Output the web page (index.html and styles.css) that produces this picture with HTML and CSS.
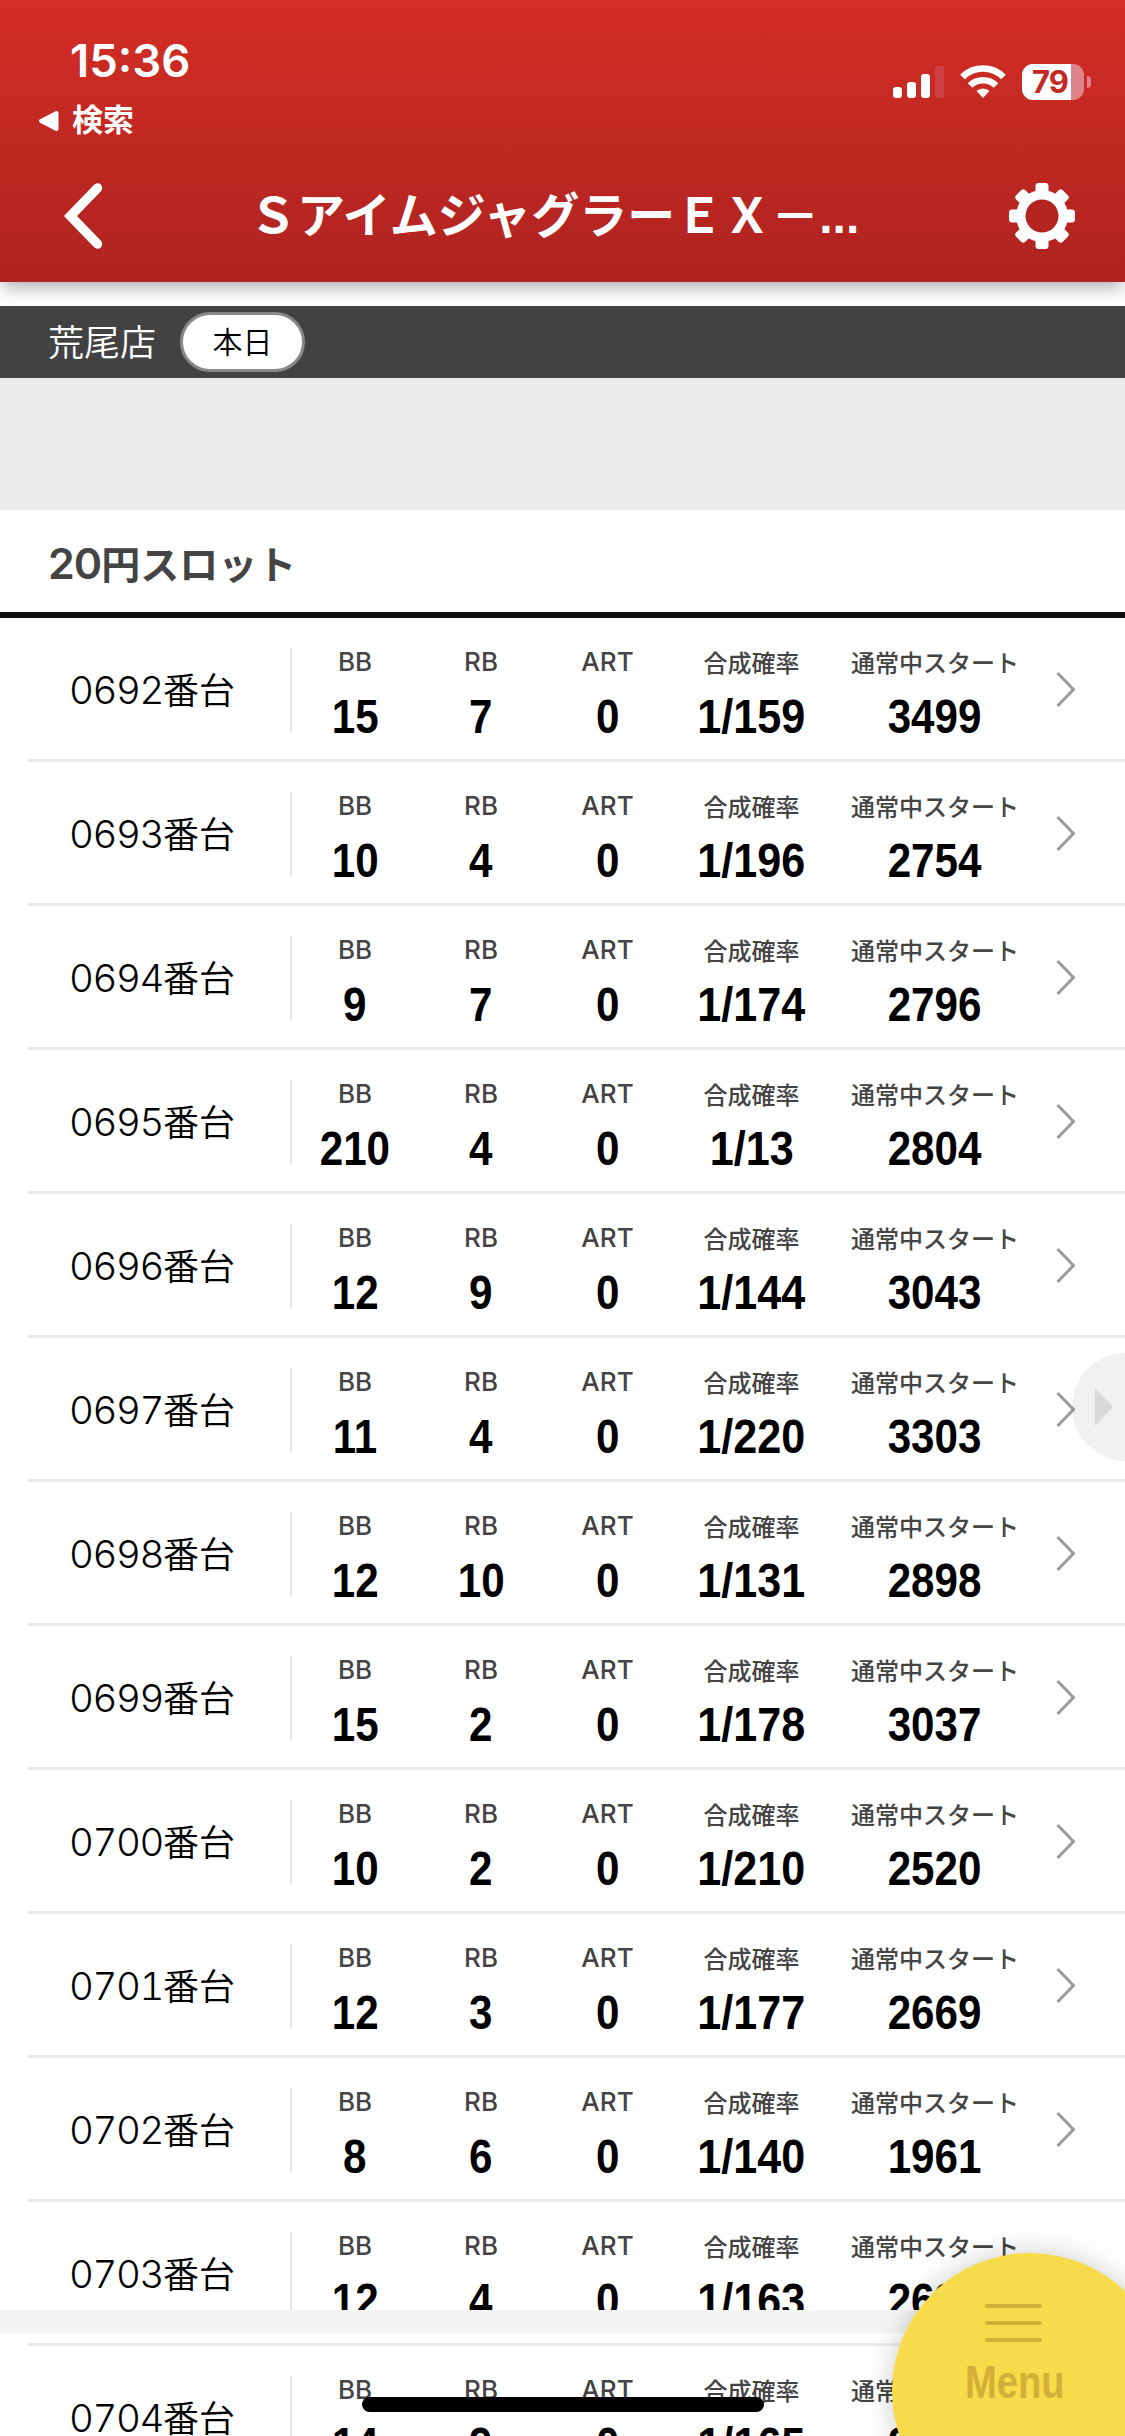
FILE: index.html
```html
<!DOCTYPE html>
<html lang="ja">
<head>
<meta charset="utf-8">
<title>Sアイムジャグラー</title>
<link rel="stylesheet" href="styles.css">
</head>
<body>
<header class="header">
  <div class="status">
    <div class="status-left">
      <div class="time">15:36</div>
      <div class="back-app"><svg width="21" height="22" viewBox="0 0 21 22"><path d="M3 11 L18.500 3 V19 Z" fill="#fff" stroke="#fff" stroke-width="4" stroke-linejoin="round"/></svg><span>検索</span></div>
    </div>
    <div class="status-right">
      <svg class="signal" width="52" height="36" viewBox="0 0 52 36"><g fill="#fff"><rect x="1" y="23" width="9" height="11" rx="3"/><rect x="15" y="18" width="9" height="16" rx="3"/><rect x="29" y="10" width="9" height="24" rx="3"/><rect x="43" y="2" width="9" height="32" rx="3" fill="#cd4146"/></g></svg>
      <svg class="wifi" width="46" height="36" viewBox="0 0 46 36"><g fill="none" stroke="#fff" stroke-width="6.500"><path d="M2.500 13 A29 29 0 0 1 43.500 13"/><path d="M10 21.500 A18.500 18.500 0 0 1 36 21.500"/></g><path d="M23 34 L16.500 27 A9.500 9.500 0 0 1 29.500 27 Z" fill="#fff"/></svg>
      <div class="battery"><span>79</span></div><i class="battery-tip"></i>
    </div>
  </div>
  <div class="nav">
    <svg class="nav-back" width="44" height="72" viewBox="0 0 44 72"><path d="M37.500 8 L10.500 36 L37.500 64" fill="none" stroke="#fff" stroke-width="9.500" stroke-linecap="round"/></svg>
    <h1 class="title">ＳアイムジャグラーＥＸ－<span class="dots">...</span></h1>
    <svg class="gear" width="66" height="66" viewBox="-33 -33 66 66"><g fill="#fff"><circle r="26"/><g id="t"><rect x="-6.500" y="-33" width="13" height="66" rx="3"/><rect x="-33" y="-6.500" width="66" height="13" rx="3"/></g><use href="#t" transform="rotate(45)"/></g><circle r="16.500" fill="#b32420"/></svg>
  </div>
</header>
<div class="shop"><span class="shop-name">荒尾店</span><span class="pill">本日</span></div>
<div class="spacer"></div>
<h2 class="section"><b>20</b>円スロット</h2>
<main class="list" id="list"></main>
<div class="band"></div>
<div class="side-tab"><svg width="18" height="38" viewBox="0 0 18 38"><path d="M0 0 L18 19 L0 38 Z" fill="#d9d9d9"/></svg></div>
<div class="menu"><i></i><i></i><i></i><span>Menu</span></div>
<div class="home-bar"></div>
<script src="rows.js"></script>
</body>
</html>
```
FILE: rows.js
```js
const machines = [
  ['0692', '15', '7', '0', '1/159', '3499'],
  ['0693', '10', '4', '0', '1/196', '2754'],
  ['0694', '9', '7', '0', '1/174', '2796'],
  ['0695', '210', '4', '0', '1/13', '2804'],
  ['0696', '12', '9', '0', '1/144', '3043'],
  ['0697', '11', '4', '0', '1/220', '3303'],
  ['0698', '12', '10', '0', '1/131', '2898'],
  ['0699', '15', '2', '0', '1/178', '3037'],
  ['0700', '10', '2', '0', '1/210', '2520'],
  ['0701', '12', '3', '0', '1/177', '2669'],
  ['0702', '8', '6', '0', '1/140', '1961'],
  ['0703', '12', '4', '0', '1/163', '2693'],
  ['0704', '14', '9', '0', '1/165', '2777'],
];
const labels = ['BB', 'RB', 'ART', '合成確率', '通常中スタート'];
document.getElementById('list').innerHTML = machines.map(([no, ...values]) => `
  <div class="row">
    <div class="name"><b>${no}</b>番台</div>
    <div class="stats">${values.map((v, i) => `<div class="stat"><span class="label${i < 3 ? ' latin' : ''}">${labels[i]}</span><span class="value${i === 3 ? ' ratio' : ''}">${v}</span></div>`).join('')}</div>
    <svg class="chevron" width="22" height="40" viewBox="0 0 22 40"><path d="M2.500 4 L18.500 20.500 L2.500 37" fill="none" stroke="#999" stroke-width="3"/></svg>
  </div>`).join('');
```
FILE: styles.css
```css
* { box-sizing: border-box; }
body {
  margin: 0;
  width: 1125px;
  height: 2436px;
  overflow: hidden;
  position: relative;
  background: #fff;
  color: #000;
  font-family: "Noto Sans CJK JP", sans-serif;
}
svg { display: block; flex: none; }
.header {
  height: 282px;
  background: linear-gradient(#d42d25, #ae2320);
  box-shadow: 0 8px 16px -2px rgba(0, 0, 0, .3);
  color: #fff;
}
.status { height: 150px; display: flex; justify-content: space-between; }
.status-left { padding: 33px 0 0 38px; }
.time {
  padding-left: 32px;
  height: 55px;
  font: 600 45.500px/55px Inter, sans-serif;
}
.back-app { display: flex; align-items: center; gap: 13px; height: 66px; font-size: 31px; font-weight: 700; }
.back-app span { line-height: 60px; height: 66px; }
.status-right { display: flex; align-items: flex-start; padding: 64px 34px 0 0; }
.wifi { margin: 0 16px 0 16px; }
.battery {
  width: 62px;
  height: 36px;
  border-radius: 11px;
  background: linear-gradient(90deg, #fff 49px, #df8388 49px);
  color: #c52923;
  font: 700 31px/36px Inter, sans-serif;
  letter-spacing: -1px;
  padding-left: 10px;
}
.battery-tip { width: 4px; height: 12px; margin: 12px 0 0 3px; border-radius: 0 6px 6px 0; background: #df8388; }
.nav { height: 132px; display: flex; align-items: center; padding: 0 50px 0 60px; }
.title { flex: 1; margin: 0 0 3px 145px; font-size: 48px; font-weight: 700; line-height: 72px; white-space: nowrap; }
.dots { font-family: "Liberation Sans", sans-serif; }
.shop {
  margin-top: 24px;
  height: 72px;
  padding-left: 48px;
  display: flex;
  align-items: center;
  background: #424242;
  color: #fff;
  font-size: 36px;
  font-weight: 350;
}
.shop-name { width: 132px; height: 72px; line-height: 69px; }
.pill {
  width: 125px;
  height: 60px;
  border: 3px solid #888;
  border-radius: 30px;
  background: #fff;
  color: #000;
  font-size: 30px;
  line-height: 51px;
  text-align: center;
}
.spacer { height: 132px; background: #ebebeb; }
.section {
  margin: 0;
  height: 108px;
  padding-left: 48px;
  border-bottom: 6px solid #111;
  color: #444;
  font-size: 39px;
  font-weight: 700;
  line-height: 104px;
}
.section b { font: 600 43px Inter, sans-serif; letter-spacing: -1px; }
.row {
  height: 144px;
  margin-left: 28px;
  border-bottom: 3px solid #ebebeb;
  display: flex;
  align-items: center;
}
.name { width: 264px; padding-left: 41px; font-size: 36px; font-weight: 350; line-height: 81px; border-right: 2px solid #e6e6e6; height: 84px; margin-top: 3px; white-space: nowrap; }
.name b { font: 300 38.500px Inter, sans-serif; font-feature-settings: "tnum"; letter-spacing: -1.400px; }
.stats { display: grid; grid-template-columns: 126px 126px 127px 161px 206px; margin-top: 2px; }
.stat { display: flex; flex-direction: column; align-items: center; }
.label { height: 50px; font: 500 24px/48px "Noto Sans CJK JP", sans-serif; color: #444; white-space: nowrap; }
.latin { font: 500 26px/48px Inter, sans-serif; }
.value { height: 54px; font: 700 49px/57px "Liberation Sans", sans-serif; transform: scaleX(.86); }
.ratio { transform: scaleX(.88); }
.chevron { margin-left: 17px; margin-top: 1px; }
.band { position: absolute; left: 0; top: 2310px; width: 100%; height: 23px; background: #f5f5f5; }
.side-tab { position: absolute; left: 1072px; top: 1353px; width: 108px; height: 108px; border-radius: 50%; background: rgba(0, 0, 0, .055); padding: 35px 0 0 23px; }
.menu {
  position: absolute;
  left: 892px;
  top: 2253px;
  width: 276px;
  height: 276px;
  border-radius: 50%;
  background: #f7db4a;
  box-shadow: 0 0 30px rgba(0, 0, 0, .2);
  color: #d4af37;
  padding: 51px 0 0 93px;
}
.menu i { display: block; width: 57px; height: 4px; border-radius: 2px; margin-bottom: 13px; background: #d4af37; }
.menu span { display: block; width: 115px; margin-left: -20px; transform: scaleX(.83); transform-origin: 0 50%; font: 700 46px/55px "Liberation Sans", sans-serif; }
.home-bar { position: absolute; left: 362px; top: 2397px; width: 402px; height: 15px; border-radius: 8px; background: #000; }
```
